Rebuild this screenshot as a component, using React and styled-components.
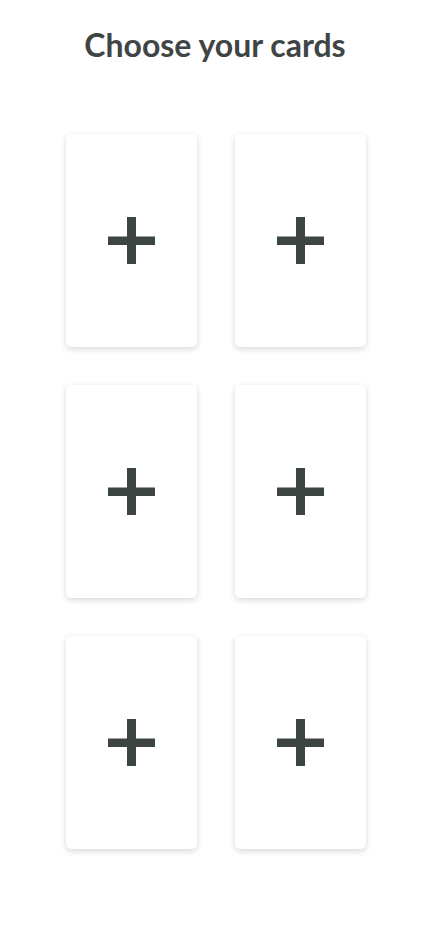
import React from 'react';
import styled, { createGlobalStyle } from 'styled-components';

const GlobalStyle = createGlobalStyle`
  body {
    margin: 0;
    background: #ffffff;
    font-family: Lato, "Open Sans", sans-serif;
  }
`;

const PlusIcon = () => (
  <svg width="47" height="47" viewBox="0 0 47 47">
    <rect x="0" y="19.5" width="47" height="8.5" fill="#3d4543" />
    <rect x="19" y="0" width="9" height="47" fill="#3d4543" />
  </svg>
);

const App = () => {
  const slots = [1, 2, 3, 4, 5, 6];
  return (
    <Page>
      <GlobalStyle />
      <Title>Choose your cards</Title>
      <CardGrid>
        {slots.map((n) => (
          <CardSlot key={n} aria-label={`Pick card ${n}`}>
            <PlusIcon />
          </CardSlot>
        ))}
      </CardGrid>
    </Page>
  );
};

export default App;

const Page = styled.div`
  display: flex;
  flex-direction: column;
  align-items: center;
  padding: 25px 0 60px;
`;

const Title = styled.h1`
  margin: 0;
  font-family: Lato, "Open Sans", sans-serif;
  font-weight: 700;
  font-size: 32px;
  line-height: 40px;
  color: #3e4544;
`;

const CardGrid = styled.div`
  display: grid;
  grid-template-columns: repeat(2, 131px);
  gap: 38px;
  margin: 69px 0 0 2px;
`;

const CardSlot = styled.button`
  width: 131px;
  height: 213px;
  border: none;
  padding: 0;
  background: #ffffff;
  border-radius: 5px;
  box-shadow: 0 2px 6px rgba(0, 0, 0, 0.16);
  display: flex;
  align-items: center;
  justify-content: center;
  cursor: pointer;
`;
